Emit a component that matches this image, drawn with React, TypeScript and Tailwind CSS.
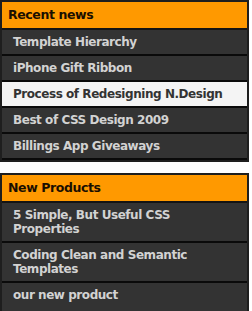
import React from "react"

type Item = { title: string; active?: boolean }

const recent: Item[] = [
  { title: "Template Hierarchy" },
  { title: "iPhone Gift Ribbon" },
  { title: "Process of Redesigning N.Design", active: true },
  { title: "Best of CSS Design 2009" },
  { title: "Billings App Giveaways" },
]

const products: Item[] = [
  { title: "5 Simple, But Useful CSS Properties" },
  { title: "Coding Clean and Semantic Templates" },
  { title: "our new product" },
]

function Box({
  heading,
  items,
  more,
}: {
  heading: string
  items: Item[]
  more?: boolean
}) {
  return (
    <div className="w-[249px] border-2 border-[#1e1e1e] bg-[#333333]">
      <h2 className="h-[26px] bg-[#ff9900] pl-[6px] text-[12.5px] tracking-[-0.4px] leading-[26px] font-bold text-[#1a0f00] border-b-2 border-[#141414] box-content">
        {heading}
      </h2>
      <ul className={more ? "pb-[8px]" : ""}>
        {items.map((item, i) => (
          <li
            key={i}
            className={
              (item.active
                ? "bg-[#f4f4f4] text-[#333333]"
                : "bg-[#333333] text-[#d2d2d2]") +
              (more && i === items.length - 1 ? "" : " border-b-2 border-[#0a0a0a]") +
              " pl-[11px] pr-[19px] py-[5px] text-[12px] tracking-[-0.45px] leading-[14px] font-bold"
            }
          >
            {item.title}
          </li>
        ))}
      </ul>
    </div>
  )
}

export default function App() {
  return (
    <div
      className="w-[252px] h-[311px] overflow-hidden bg-white flex flex-col gap-[11px]"
      style={{ fontFamily: '"DejaVu Sans", Verdana, sans-serif' }}
    >
      <Box heading="Recent news" items={recent} />
      <Box heading="New Products" items={products} more />
    </div>
  )
}
